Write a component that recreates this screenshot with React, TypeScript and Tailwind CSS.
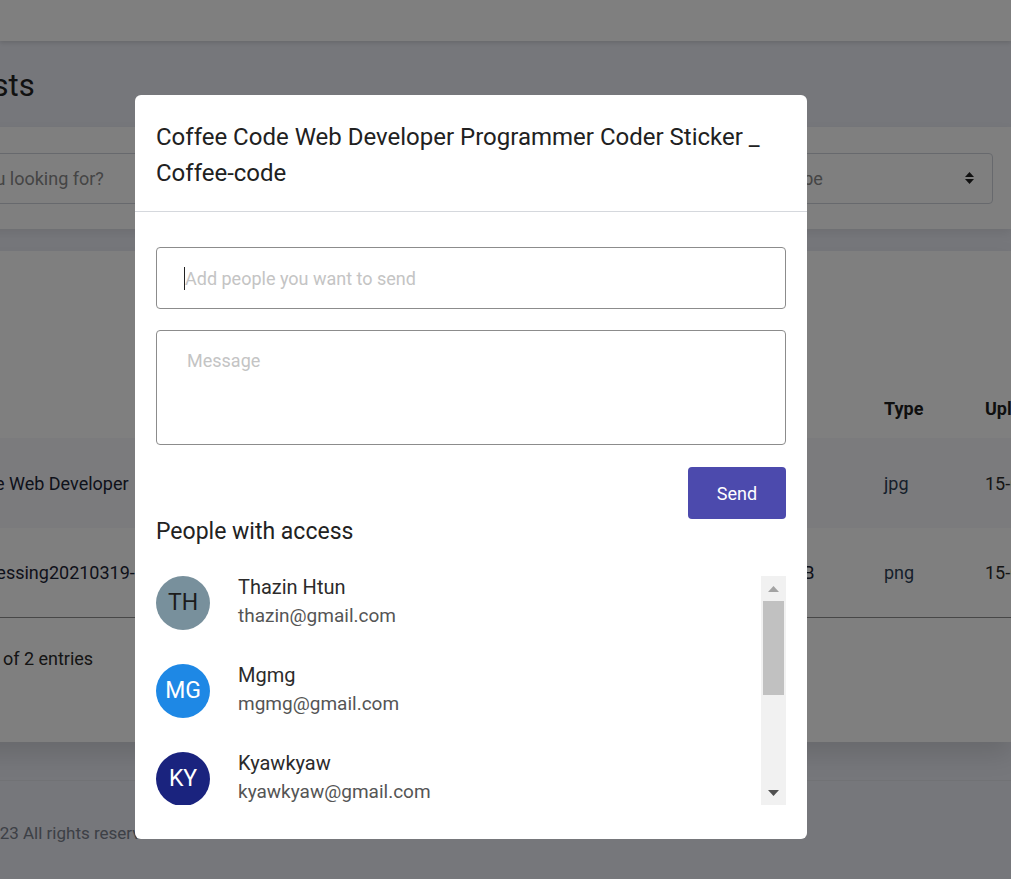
import { useEffect, useRef } from "react";

const people = [
  { initials: "TH", name: "Thazin Htun", email: "thazin@gmail.com", bg: "bg-[#78909c]", fg: "text-[#1c1c1c]" },
  { initials: "MG", name: "Mgmg", email: "mgmg@gmail.com", bg: "bg-[#1e88e5]", fg: "text-white" },
  { initials: "KY", name: "Kyawkyaw", email: "kyawkyaw@gmail.com", bg: "bg-[#1a237e]", fg: "text-white" },
  { initials: "AA", name: "Aung Aung", email: "aungaung@gmail.com", bg: "bg-[#43a047]", fg: "text-white" },
  { initials: "SU", name: "Su Su", email: "susu@gmail.com", bg: "bg-[#e53935]", fg: "text-white" },
];

const rows = [
  { name: "Coffee Code Web Developer", size: "84 KB", type: "jpg", date: "15-03-2023", striped: true },
  { name: "Photo_processing20210319-13964-1r9cyh9", size: "1.2 MB", type: "png", date: "15-03-2023", striped: false },
];

function Background() {
  return (
    <div className="min-h-[879px] bg-[#eceef6] font-['Roboto',sans-serif]">
      {/* Navbar */}
      <div className="h-[41px] bg-white shadow-[0_2px_4px_rgba(0,0,0,0.12)]" />

      <div className="-ml-[160px] w-[1171px]">
        <h1 className="pl-[72px] pt-[25px] text-[31px] font-normal leading-[40px] text-[#222]">File Lists</h1>

        {/* Filters */}
        <div className="mt-[21px] flex h-[102px] items-center gap-4 bg-white pl-[40px] pr-[18px] shadow-[0_4px_10px_rgba(0,0,0,0.08)]">
          <div className="flex h-[51px] flex-1 items-center rounded border border-[#cfd3da] pl-[20px] text-[18px] text-[#8a8a8a]">
            What are you looking for?
          </div>
          <div className="flex h-[51px] w-[246px] items-center justify-between rounded border border-[#cfd3da] pl-[12px] pr-[17px] text-[18px] text-[#8a8a8a]">
            <span>All Type</span>
            <svg width="11" height="14" viewBox="0 0 11 14">
              <path d="M5.5 1L10 6H1z" fill="#222" />
              <path d="M5.5 13L10 8H1z" fill="#222" />
            </svg>
          </div>
        </div>

        {/* Table card */}
        <div className="mt-[22px] h-[491px] overflow-hidden bg-white shadow-[0_12px_24px_rgba(0,0,0,0.12)]">
          <div className="h-[127px]" />
          <div className="flex h-[60px] items-center pl-[65px] text-[18px] font-bold text-[#1e1e1e]">
            <div className="w-[853px] shrink-0">Name</div>
            <div className="w-[126px] shrink-0">Size</div>
            <div className="w-[101px] shrink-0">Type</div>
            <div className="w-[200px] shrink-0">Uploaded</div>
          </div>
          {rows.map((r) => (
            <div
              key={r.name}
              className={`flex h-[90px] items-center pl-[65px] text-[18px] ${r.striped ? "bg-[#f6f7fb]" : "border-b border-[#8f8f8f] bg-white"}`}
            >
              <div className="w-[853px] shrink-0 text-[#1d2436]">{r.name}</div>
              <div className="w-[126px] shrink-0 text-[#1d2436]">{r.size}</div>
              <div className="w-[101px] shrink-0 text-[#2c3e57]">{r.type}</div>
              <div className="w-[200px] shrink-0 text-[#2a2a2a]">{r.date}</div>
            </div>
          ))}
          <div className="pl-[40px] pt-[27px] text-[18px] text-[#2a2a2a]">Showing 1 to 2 of 2 entries</div>
        </div>

        {/* Footer */}
        <div className="mt-[38px] border-t border-[#e2e4ea] pl-[123px] pt-[40px] text-[17px] text-[#7a808c]">
          © 2023 All rights reserved.
        </div>
      </div>
    </div>
  );
}

function ShareModal() {
  const inputRef = useRef<HTMLInputElement>(null);
  useEffect(() => {
    inputRef.current?.focus();
  }, []);

  return (
    <div className="fixed inset-0 z-10 bg-black/50 pl-[135px] pt-[95px] font-['Roboto',sans-serif]">
      <div className="relative z-10 flex h-[744px] w-[672px] flex-col rounded-md bg-white">
        {/* Header */}
        <div className="border-b border-[#d5d8dd] px-[21px] pb-[20px] pt-[24px]">
          <h2 className="text-[24px] font-normal leading-[36px] text-[#212121]">
            Coffee Code Web Developer Programmer Coder Sticker _<br />
            Coffee-code
          </h2>
        </div>

        {/* Body */}
        <div className="flex flex-1 flex-col px-[21px] pt-[35px]">
          <div className="relative">
            <input
              ref={inputRef}
              placeholder="Add people you want to send"
              className="h-[62px] w-full rounded border border-[#8c8c8c] pl-[28px] text-[18px] text-[#222] caret-[#222] outline-none placeholder:text-[#c4c4c4]"
            />
            <span className="pointer-events-none absolute left-[28px] top-[20px] h-[23px] w-px bg-[#222]" />
          </div>
          <textarea
            placeholder="Message"
            className="mt-[21px] h-[115px] w-full resize-none rounded border border-[#8c8c8c] pl-[30px] pt-[16px] text-[18px] outline-none placeholder:text-[#c4c4c4]"
          />
          <div className="mt-[22px] flex justify-end">
            <button className="h-[52px] w-[98px] rounded bg-[#4c4aad] text-[18px] text-white">Send</button>
          </div>
          <h3 className="text-[23px] leading-[26px] text-[#222]">People with access</h3>

          <div className="mt-[31px] flex h-[229px]">
            <div className="flex flex-1 flex-col gap-[34px] overflow-hidden">
              {people.map((p) => (
                <div key={p.email} className="flex shrink-0 items-start">
                  <div
                    className={`flex h-[54px] w-[54px] shrink-0 items-center justify-center rounded-full text-[23px] ${p.bg} ${p.fg}`}
                  >
                    {p.initials}
                  </div>
                  <div className="ml-[28px] flex flex-col">
                    <div className="-mt-px text-[20px] leading-6 text-[#2b2b2b]">{p.name}</div>
                    <div className="mt-[5px] text-[19px] leading-6 text-[#555]">{p.email}</div>
                  </div>
                </div>
              ))}
            </div>
            {/* Scrollbar */}
            <div className="flex w-[25px] flex-col items-center bg-[#f1f1f1]">
              <div className="flex h-[25px] items-center justify-center">
                <svg width="11" height="6" viewBox="0 0 11 6">
                  <path d="M5.5 0L11 6H0z" fill="#a3a3a3" />
                </svg>
              </div>
              <div className="h-[94px] w-[21px] bg-[#c1c1c1]" />
              <div className="flex-1" />
              <div className="flex h-[25px] items-center justify-center">
                <svg width="11" height="6" viewBox="0 0 11 6">
                  <path d="M0 0H11L5.5 6z" fill="#505050" />
                </svg>
              </div>
            </div>
          </div>
        </div>
      </div>
    </div>
  );
}

export default function App() {
  return (
    <div className="relative h-[879px] w-[1011px] overflow-hidden">
      <Background />
      <ShareModal />
    </div>
  );
}
